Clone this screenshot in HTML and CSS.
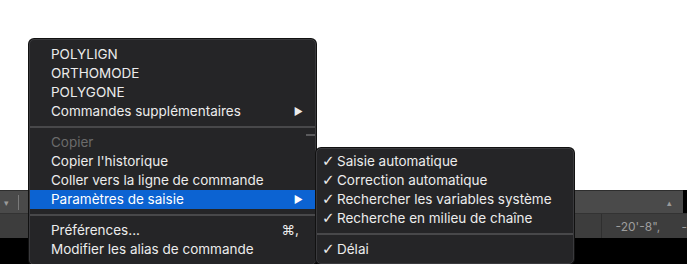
FILE: index.html
```html
<!DOCTYPE html>
<html lang="fr">
<head>
  <meta charset="UTF-8">
  <title>Menu contextuel</title>
  <link rel="stylesheet" href="styles.css">
</head>
<body>
  <div class="canvas"></div>
  <div class="cmd-bar">
    <span class="cmd-drop">&#9662;</span>
    <span class="cmd-div"></span>
    <span class="cmd-fill"></span>
    <span class="cmd-up">&#9652;</span>
  </div>
  <div class="status-bar">
    <span class="status-left"></span>
    <span class="status-coords">-20'-8",</span>
    <span class="status-more">-</span>
  </div>
  <div class="bottom"></div>

  <div class="menu main-menu">
    <div class="item">POLYLIGN</div>
    <div class="item">ORTHOMODE</div>
    <div class="item">POLYGONE</div>
    <div class="item">Commandes supplémentaires<span class="arrow">&#9654;</span></div>
    <div class="sep"></div>
    <div class="item disabled">Copier<span class="dash"></span></div>
    <div class="item">Copier l'historique</div>
    <div class="item">Coller vers la ligne de commande</div>
    <div class="item active">Paramètres de saisie<span class="arrow">&#9654;</span></div>
    <div class="sep"></div>
    <div class="item">Préférences...<span class="key">&#8984;,</span></div>
    <div class="item">Modifier les alias de commande</div>
  </div>

  <div class="menu sub-menu">
    <div class="item"><span class="check">&#10003;</span>Saisie automatique</div>
    <div class="item"><span class="check">&#10003;</span>Correction automatique</div>
    <div class="item"><span class="check">&#10003;</span>Rechercher les variables système</div>
    <div class="item"><span class="check">&#10003;</span>Recherche en milieu de chaîne</div>
    <div class="sep"></div>
    <div class="item"><span class="check">&#10003;</span>Délai</div>
  </div>
</body>
</html>
```

FILE: styles.css
```css
body {
  margin: 0;
  width: 687px;
  height: 264px;
  overflow: hidden;
  position: relative;
  background: #000;
  font-family: Inter, "Liberation Sans", sans-serif;
  font-size: 13.5px;
  color: #ececec;
}
.canvas {
  height: 190px;
  background: #fff;
}
.cmd-bar {
  height: 23px;
  width: 683px;
  background: #4a4a4a;
  border-top: 1px solid #2e2e2e;
  box-sizing: border-box;
  display: flex;
  align-items: center;
  color: #9a9a9a;
  font-size: 9px;
}
.cmd-drop {
  width: 12px;
  text-align: center;
}
.cmd-div {
  width: 1px;
  height: 15px;
  background: #7a7a7a;
  margin-left: 6px;
}
.cmd-fill {
  flex: 1;
}
.cmd-up {
  width: 12px;
  margin-right: 4px;
}
.status-bar {
  height: 24px;
  background: #3d3d3d;
  border-top: 1px solid #333;
  display: flex;
  align-items: center;
  color: #9d9d9d;
  font-size: 12px;
}
.status-left {
  width: 602px;
  height: 100%;
  border-right: 1px solid #2f2f2f;
}
.status-coords {
  margin-left: 14px;
  width: 62px;
}
.status-more {
  margin-left: 4px;
}
.bottom {
  height: 30px;
  background: #000;
}
.menu {
  position: absolute;
  background: #252527;
  border: 1px solid #3a3a3d;
  border-radius: 5px;
  box-shadow: 0 0 0 1px #111;
  box-sizing: border-box;
}
.main-menu {
  left: 29px;
  top: 39px;
  width: 287px;
  height: 226px;
  padding-top: 5px;
}
.sub-menu {
  left: 316px;
  top: 148px;
  width: 258px;
  height: 116px;
  padding-top: 3px;
}
.item {
  height: 19px;
  line-height: 19px;
  padding-left: 21px;
  display: flex;
  white-space: nowrap;
}
.sub-menu .item {
  padding-left: 5px;
}
.item.disabled {
  color: #6b6b6b;
}
.item.active {
  background: #0c63d2;
  color: #fff;
}
.arrow {
  margin-left: auto;
  margin-right: 12px;
  font-size: 10px;
}
.key {
  margin-left: auto;
  margin-right: 16px;
}
.dash {
  margin-left: auto;
  width: 9px;
  height: 2px;
  margin-top: 1px;
  background: #5a5a5c;
}
.check {
  width: 15px;
  font-family: "DejaVu Sans", sans-serif;
  font-size: 15px;
  font-weight: bold;
}
.sep {
  height: 2px;
  margin: 5px 0;
  background: #48484a;
}
```
